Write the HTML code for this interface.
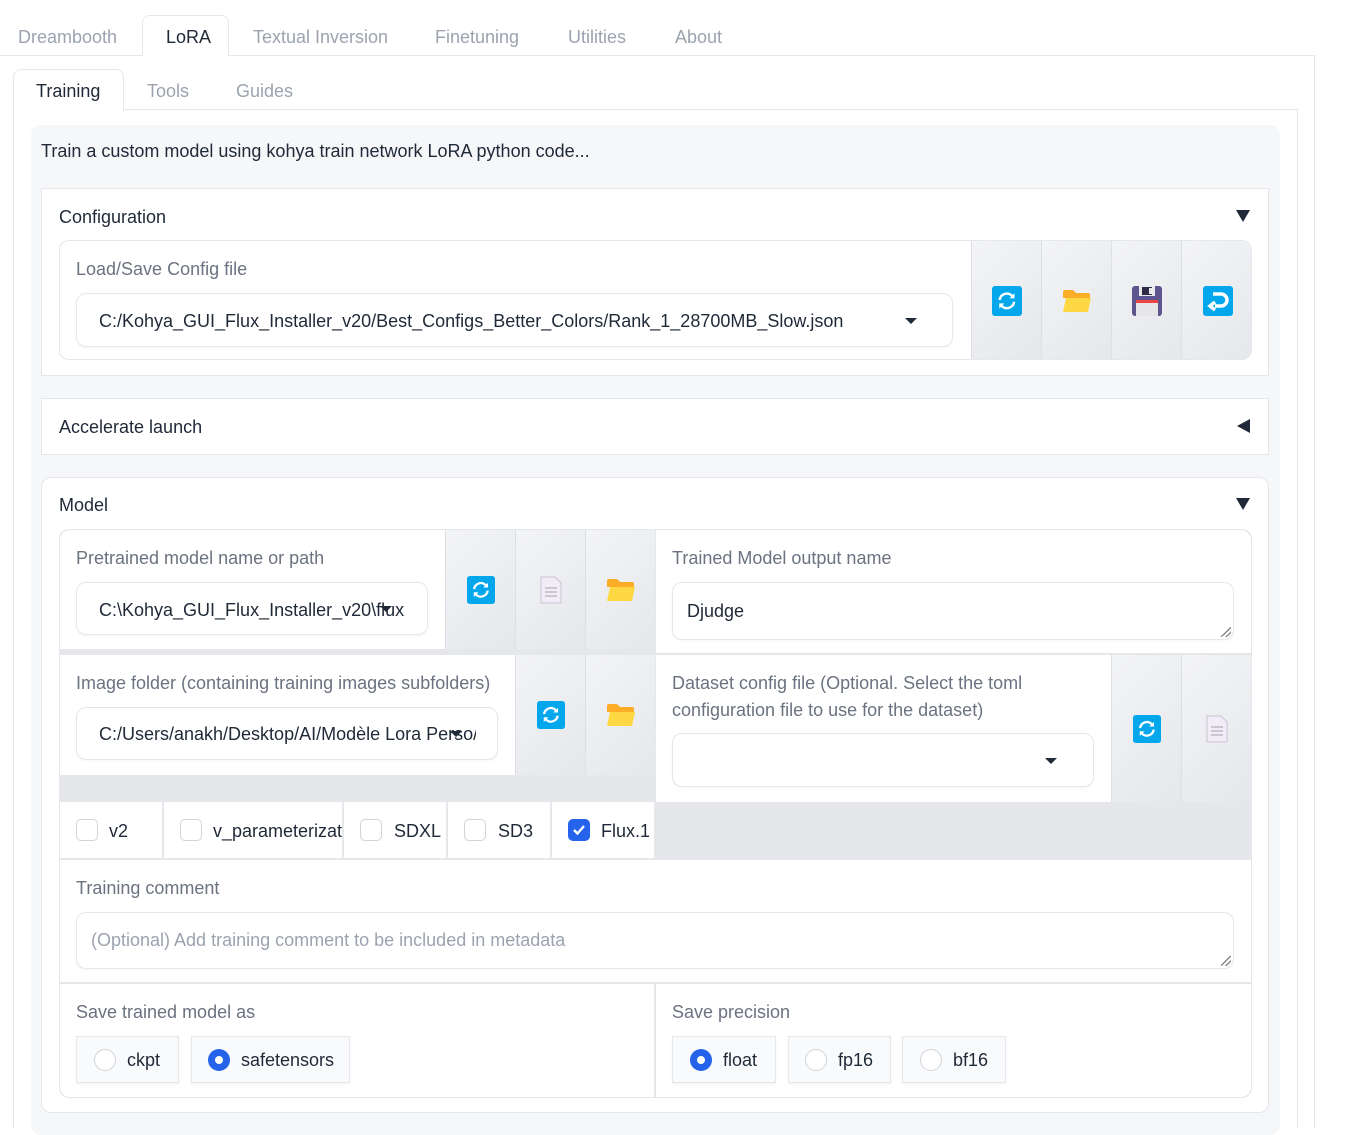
<!DOCTYPE html>
<html><head><meta charset="utf-8"><style>
*{box-sizing:border-box;margin:0;padding:0}
body{width:1355px;height:1128px;background:#fff;font-family:"Liberation Sans",sans-serif;font-size:18px;color:#1f2937;position:relative;overflow:hidden}
.a{position:absolute}
.t{position:absolute;white-space:nowrap;line-height:20px}
.lbl{color:#6b7280}
.gray{color:#9ca3af}
.w{position:absolute;background:#fff}
.btn{position:absolute;background:linear-gradient(135deg,#f3f4f6,#e5e7eb);border-left:1px solid #dcdfe4;display:flex;align-items:center;justify-content:center}
.inp{position:absolute;background:#fff;border:1px solid #e5e7eb;border-radius:10px;box-shadow:0 1px 2px rgba(0,0,0,.04)}
.cb{position:absolute;width:22px;height:22px;border:1px solid #d1d5db;border-radius:5px;background:#fff}
.rb{position:absolute;background:#f9fafb;border:1px solid #e5e7eb;box-shadow:0 1px 2px rgba(0,0,0,.06)}
.rc{position:absolute;width:22px;height:22px;border-radius:50%;border:1px solid #d1d5db;background:#fff}
.rs{position:absolute;width:22px;height:22px;border-radius:50%;background:#2563eb}
.rs:after{content:"";position:absolute;left:7px;top:7px;width:8px;height:8px;border-radius:50%;background:#fff}
.caret{position:absolute;width:0;height:0;border-left:6px solid transparent;border-right:6px solid transparent;border-top:6px solid #1f2937}
.rz{position:absolute;width:10px;height:10px;background:linear-gradient(135deg,transparent 45%,#888 45%,#888 55%,transparent 55%,transparent 70%,#888 70%,#888 80%,transparent 80%)}
</style></head><body>

<div class="a" style="left:0;top:55px;width:1315px;height:1px;background:#e5e7eb"></div>
<div class="a" style="left:1314px;top:55px;width:1px;height:1073px;background:#e5e7eb"></div>
<div class="a" style="left:142px;top:15px;width:87px;height:42px;background:#fff;border:1px solid #e5e7eb;border-bottom:none;border-radius:8px 8px 0 0"></div>
<div class="t gray" style="left:18px;top:27px">Dreambooth</div>
<div class="t" style="left:166px;top:27px;color:#1f2937">LoRA</div>
<div class="t gray" style="left:253px;top:27px">Textual Inversion</div>
<div class="t gray" style="left:435px;top:27px">Finetuning</div>
<div class="t gray" style="left:568px;top:27px">Utilities</div>
<div class="t gray" style="left:675px;top:27px">About</div>

<div class="a" style="left:13px;top:109px;width:1285px;height:1px;background:#e5e7eb"></div>
<div class="a" style="left:13px;top:109px;width:1px;height:1019px;background:#e5e7eb"></div>
<div class="a" style="left:1297px;top:109px;width:1px;height:1019px;background:#e5e7eb"></div>
<div class="a" style="left:13px;top:69px;width:111px;height:42px;background:#fff;border:1px solid #e5e7eb;border-bottom:none;border-radius:8px 8px 0 0"></div>
<div class="t" style="left:36px;top:81px">Training</div>
<div class="t gray" style="left:147px;top:81px">Tools</div>
<div class="t gray" style="left:236px;top:81px">Guides</div>

<div class="a" style="left:31px;top:125px;width:1249px;height:1010px;background:#f6f7f9;border-radius:10px"></div>
<div class="t" style="left:41px;top:141px">Train a custom model using kohya train network LoRA python code...</div>

<div class="w" style="left:41px;top:188px;width:1228px;height:188px;border:1px solid #e5e7eb"></div>
<div class="t" style="left:59px;top:207px">Configuration</div>
<div class="caret" style="left:1236px;top:210px;border-left-width:7px;border-right-width:7px;border-top-width:12px"></div>
<div class="w" style="left:59px;top:240px;width:1193px;height:120px;border:1px solid #e5e7eb;border-radius:10px;overflow:hidden">
  <div class="t lbl" style="left:16px;top:18px">Load/Save Config file</div>
  <div class="btn" style="left:911px;top:0;width:70px;height:120px"><svg width="30" height="30" viewBox="0 0 30 30"><rect width="30" height="30" rx="3" fill="#04a7ec"/><path d="M8 14a7 7 0 0 1 12-4l-2 2h6V6l-2 2A10 10 0 0 0 5 14zM22 16a7 7 0 0 1-12 4l2-2H6v6l2-2a10 10 0 0 0 17-6z" fill="#fff" transform="scale(.85) translate(2.5 2.5)"/></svg></div>
  <div class="btn" style="left:981px;top:0;width:70px;height:120px"><svg width="30" height="26" viewBox="0 0 30 26"><path d="M1 4q0-2 2-2h8l3 3h12q2 0 2 2v3H1z" fill="#fbad28"/><path d="M4 10h25l-3 14H1z" fill="#fed843"/></svg></div>
  <div class="btn" style="left:1051px;top:0;width:70px;height:120px"><svg width="30" height="30" viewBox="0 0 30 30"><rect width="30" height="30" rx="3" fill="#5e548e"/><rect x="7" y="0" width="16" height="10" fill="#e9e9ee"/><rect x="10" y="1" width="10" height="8" fill="#2d2a45"/><rect x="17" y="2" width="3" height="6" fill="#e9e9ee"/><rect x="4" y="14" width="22" height="16" fill="#e6e6e9"/><rect x="4" y="14" width="22" height="3" fill="#ef4444"/></svg></div>
  <div class="btn" style="left:1121px;top:0;width:72px;height:120px"><svg width="30" height="30" viewBox="0 0 30 30"><rect width="30" height="30" rx="3" fill="#04a7ec"/><path d="M10 8h8a6 6 0 0 1 0 12h-6M12 16l-5 4 5 4" fill="none" stroke="#fff" stroke-width="3.5"/></svg></div>
</div>
<div class="inp" style="left:76px;top:293px;width:877px;height:54px"></div>
<div class="t" style="left:99px;top:311px;width:790px;overflow:hidden">C:/Kohya_GUI_Flux_Installer_v20/Best_Configs_Better_Colors/Rank_1_28700MB_Slow.json</div>
<div class="caret" style="left:905px;top:318px"></div>

<div class="w" style="left:41px;top:398px;width:1228px;height:57px;border:1px solid #e5e7eb"></div>
<div class="t" style="left:59px;top:417px">Accelerate launch</div>
<div class="a" style="left:1237px;top:419px;width:0;height:0;border-top:7px solid transparent;border-bottom:7px solid transparent;border-right:13px solid #1f2937"></div>

<div class="w" style="left:41px;top:477px;width:1228px;height:636px;border:1px solid #e5e7eb;border-radius:10px"></div>
<div class="t" style="left:59px;top:495px">Model</div>
<div class="caret" style="left:1236px;top:498px;border-left-width:7px;border-right-width:7px;border-top-width:12px"></div>
<div class="a" style="left:59px;top:529px;width:1193px;height:569px;background:#e5e7eb;border:1px solid #e5e7eb;border-radius:10px;overflow:hidden"></div>

<div class="w" style="left:60px;top:530px;width:385px;height:119px;border-radius:10px 0 0 0"></div>
<div class="t lbl" style="left:76px;top:548px">Pretrained model name or path</div>
<div class="inp" style="left:76px;top:582px;width:352px;height:53px"></div>
<div class="t" style="left:99px;top:600px;width:306px;overflow:hidden">C:\Kohya_GUI_Flux_Installer_v20\flux.</div>
<div class="caret" style="left:380px;top:606px"></div>
<div class="btn" style="left:445px;top:530px;width:70px;height:119px"><svg width="28" height="28" viewBox="0 0 30 30"><rect width="30" height="30" rx="3" fill="#04a7ec"/><path d="M8 14a7 7 0 0 1 12-4l-2 2h6V6l-2 2A10 10 0 0 0 5 14zM22 16a7 7 0 0 1-12 4l2-2H6v6l2-2a10 10 0 0 0 17-6z" fill="#fff" transform="scale(.85) translate(2.5 2.5)"/></svg></div>
<div class="btn" style="left:515px;top:530px;width:70px;height:119px"><svg width="22" height="28" viewBox="0 0 22 28"><path d="M1 1h14l6 6v20H1z" fill="#f1ecf5" stroke="#cbc3d4"/><path d="M5 12h12M5 16h12M5 20h12" stroke="#a8a0b0"/></svg></div>
<div class="btn" style="left:585px;top:530px;width:70px;height:119px"><svg width="30" height="26" viewBox="0 0 30 26"><path d="M1 4q0-2 2-2h8l3 3h12q2 0 2 2v3H1z" fill="#fbad28"/><path d="M4 10h25l-3 14H1z" fill="#fed843"/></svg></div>
<div class="w" style="left:656px;top:530px;width:595px;height:123px;border-radius:0 10px 0 0"></div>
<div class="t lbl" style="left:672px;top:548px">Trained Model output name</div>
<div class="inp" style="left:672px;top:582px;width:562px;height:58px"></div>
<div class="t" style="left:687px;top:601px">Djudge</div>
<div class="rz" style="left:1221px;top:627px"></div>

<div class="w" style="left:60px;top:655px;width:455px;height:120px"></div>
<div class="t lbl" style="left:76px;top:673px">Image folder (containing training images subfolders)</div>
<div class="inp" style="left:76px;top:707px;width:422px;height:53px"></div>
<div class="t" style="left:99px;top:724px;width:377px;overflow:hidden">C:/Users/anakh/Desktop/AI/Modèle Lora Perso/</div>
<div class="caret" style="left:450px;top:731px"></div>
<div class="btn" style="left:515px;top:655px;width:70px;height:120px"><svg width="28" height="28" viewBox="0 0 30 30"><rect width="30" height="30" rx="3" fill="#04a7ec"/><path d="M8 14a7 7 0 0 1 12-4l-2 2h6V6l-2 2A10 10 0 0 0 5 14zM22 16a7 7 0 0 1-12 4l2-2H6v6l2-2a10 10 0 0 0 17-6z" fill="#fff" transform="scale(.85) translate(2.5 2.5)"/></svg></div>
<div class="btn" style="left:585px;top:655px;width:70px;height:120px"><svg width="30" height="26" viewBox="0 0 30 26"><path d="M1 4q0-2 2-2h8l3 3h12q2 0 2 2v3H1z" fill="#fbad28"/><path d="M4 10h25l-3 14H1z" fill="#fed843"/></svg></div>
<div class="w" style="left:656px;top:655px;width:455px;height:147px"></div>
<div class="t lbl" style="left:672px;top:673px">Dataset config file (Optional. Select the toml</div>
<div class="t lbl" style="left:672px;top:700px">configuration file to use for the dataset)</div>
<div class="inp" style="left:672px;top:733px;width:422px;height:54px"></div>
<div class="caret" style="left:1045px;top:758px"></div>
<div class="btn" style="left:1111px;top:655px;width:70px;height:147px"><svg width="28" height="28" viewBox="0 0 30 30"><rect width="30" height="30" rx="3" fill="#04a7ec"/><path d="M8 14a7 7 0 0 1 12-4l-2 2h6V6l-2 2A10 10 0 0 0 5 14zM22 16a7 7 0 0 1-12 4l2-2H6v6l2-2a10 10 0 0 0 17-6z" fill="#fff" transform="scale(.85) translate(2.5 2.5)"/></svg></div>
<div class="btn" style="left:1181px;top:655px;width:70px;height:147px"><svg width="22" height="28" viewBox="0 0 22 28"><path d="M1 1h14l6 6v20H1z" fill="#f1ecf5" stroke="#cbc3d4"/><path d="M5 12h12M5 16h12M5 20h12" stroke="#a8a0b0"/></svg></div>

<div class="w" style="left:60px;top:802px;width:102px;height:56px"></div>
<div class="w" style="left:164px;top:802px;width:178px;height:56px"></div>
<div class="w" style="left:344px;top:802px;width:102px;height:56px"></div>
<div class="w" style="left:448px;top:802px;width:102px;height:56px"></div>
<div class="w" style="left:552px;top:802px;width:102px;height:56px"></div>
<div class="cb" style="left:76px;top:819px"></div><div class="t" style="left:109px;top:821px">v2</div>
<div class="cb" style="left:180px;top:819px"></div><div class="t" style="left:213px;top:821px;width:130px;overflow:hidden">v_parameterization</div>
<div class="cb" style="left:360px;top:819px"></div><div class="t" style="left:394px;top:821px">SDXL</div>
<div class="cb" style="left:464px;top:819px"></div><div class="t" style="left:498px;top:821px">SD3</div>
<div class="cb" style="left:568px;top:819px;background:#2563eb;border-color:#2563eb"><svg width="20" height="20" viewBox="0 0 20 20"><path d="M5 10l3.5 3.5L15 6" fill="none" stroke="#fff" stroke-width="2.4"/></svg></div><div class="t" style="left:601px;top:821px;width:53px;overflow:hidden">Flux.1</div>

<div class="w" style="left:60px;top:860px;width:1191px;height:122px"></div>
<div class="t lbl" style="left:76px;top:878px">Training comment</div>
<div class="inp" style="left:76px;top:912px;width:1158px;height:57px"></div>
<div class="t" style="left:91px;top:930px;color:#9ca3af">(Optional) Add training comment to be included in metadata</div>
<div class="rz" style="left:1221px;top:956px"></div>

<div class="w" style="left:60px;top:984px;width:594px;height:113px;border-radius:0 0 0 10px"></div>
<div class="w" style="left:656px;top:984px;width:595px;height:113px;border-radius:0 0 10px 0"></div>
<div class="t lbl" style="left:76px;top:1002px">Save trained model as</div>
<div class="rb" style="left:76px;top:1036px;width:103px;height:47px"></div><div class="rc" style="left:94px;top:1049px"></div><div class="t" style="left:127px;top:1050px">ckpt</div>
<div class="rb" style="left:191px;top:1036px;width:159px;height:47px"></div><div class="rs" style="left:208px;top:1049px"></div><div class="t" style="left:241px;top:1050px">safetensors</div>
<div class="t lbl" style="left:672px;top:1002px">Save precision</div>
<div class="rb" style="left:672px;top:1036px;width:104px;height:47px"></div><div class="rs" style="left:690px;top:1049px"></div><div class="t" style="left:723px;top:1050px">float</div>
<div class="rb" style="left:788px;top:1036px;width:103px;height:47px"></div><div class="rc" style="left:805px;top:1049px"></div><div class="t" style="left:838px;top:1050px">fp16</div>
<div class="rb" style="left:902px;top:1036px;width:104px;height:47px"></div><div class="rc" style="left:920px;top:1049px"></div><div class="t" style="left:953px;top:1050px">bf16</div>

</body></html>
